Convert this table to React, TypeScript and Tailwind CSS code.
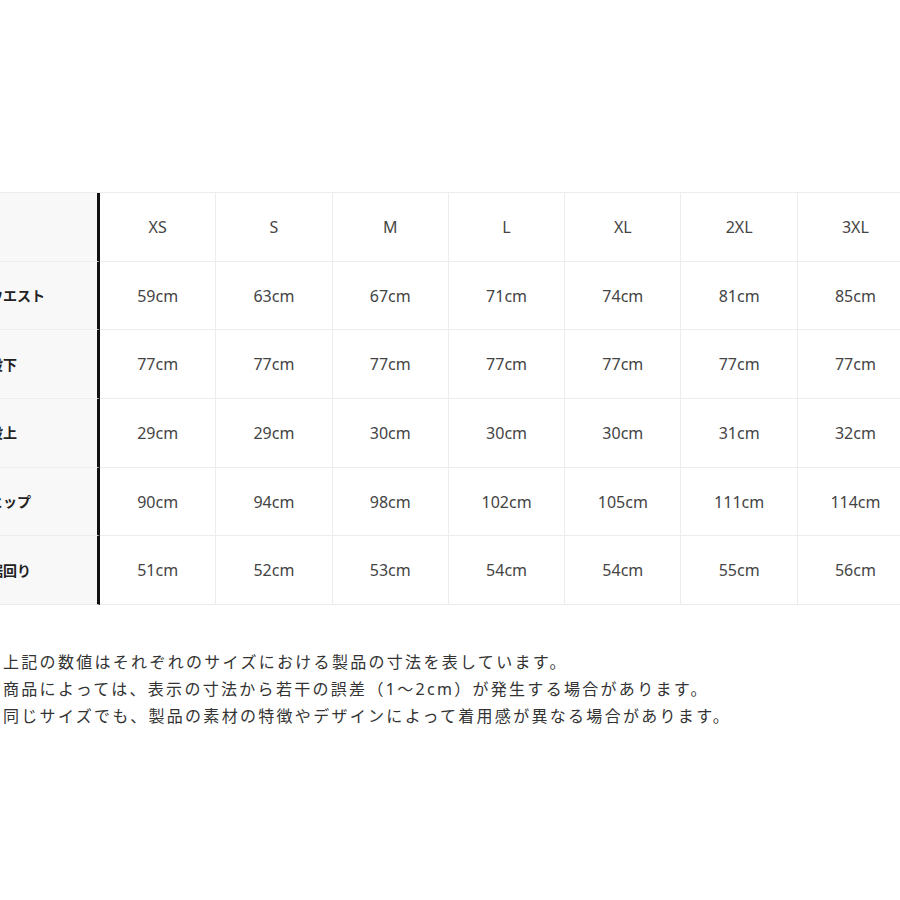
import React from "react";

// size chart for pants, the left edge of the chart is cut off in the screenshot
const sizes = ["XS", "S", "M", "L", "XL", "2XL", "3XL"];

const rows: { label: string; values: number[] }[] = [
  { label: "ウエスト", values: [59, 63, 67, 71, 74, 81, 85] },
  { label: "股下", values: [77, 77, 77, 77, 77, 77, 77] },
  { label: "股上", values: [29, 29, 30, 30, 30, 31, 32] },
  { label: "ヒップ", values: [90, 94, 98, 102, 105, 111, 114] },
  { label: "裾回り", values: [51, 52, 53, 54, 54, 55, 56] },
];

const notes = [
  "上記の数値はそれぞれのサイズにおける製品の寸法を表しています。",
  "商品によっては、表示の寸法から若干の誤差（1〜2cm）が発生する場合があります。",
  "同じサイズでも、製品の素材の特徴やデザインによって着用感が異なる場合があります。",
];

function LabelCell({ children }: { children?: React.ReactNode }) {
  return (
    <div className="h-[68.7px] flex items-center pl-[9px] bg-[#f8f8f8] border-b border-[#ececec] border-r-[3px] border-r-[#111] text-[14px] font-bold text-[#222]">
      {children}
    </div>
  );
}

function Cell({ children }: { children?: React.ReactNode }) {
  return (
    <div className="h-[68.7px] flex items-center justify-center bg-white border-b border-r border-[#ececec] text-[16px] text-[#444]">
      {children}
    </div>
  );
}

export default function App() {
  return (
    <div
      className="w-[900px] h-[900px] bg-white overflow-hidden pt-[192px]"
      style={{ fontFamily: '"Noto Sans", "Noto Sans CJK JP", sans-serif' }}
    >
      <div className="ml-[-20px] w-[940px] grid grid-cols-[120px_repeat(7,116.3px)] border-t border-[#ececec]">
        <LabelCell />
        {sizes.map((s) => (
          <Cell key={s}>{s}</Cell>
        ))}
        {rows.map((r) => (
          <React.Fragment key={r.label}>
            <LabelCell>{r.label}</LabelCell>
            {r.values.map((v, i) => (
              <Cell key={i}>{v}cm</Cell>
            ))}
          </React.Fragment>
        ))}
      </div>

      <div className="mt-[44px] pl-[3px] text-[16px] leading-[27px] tracking-[2.3px] text-[#333]">
        {notes.map((n) => (
          <p key={n} className="whitespace-nowrap">{n}</p>
        ))}
      </div>
    </div>
  );
}
